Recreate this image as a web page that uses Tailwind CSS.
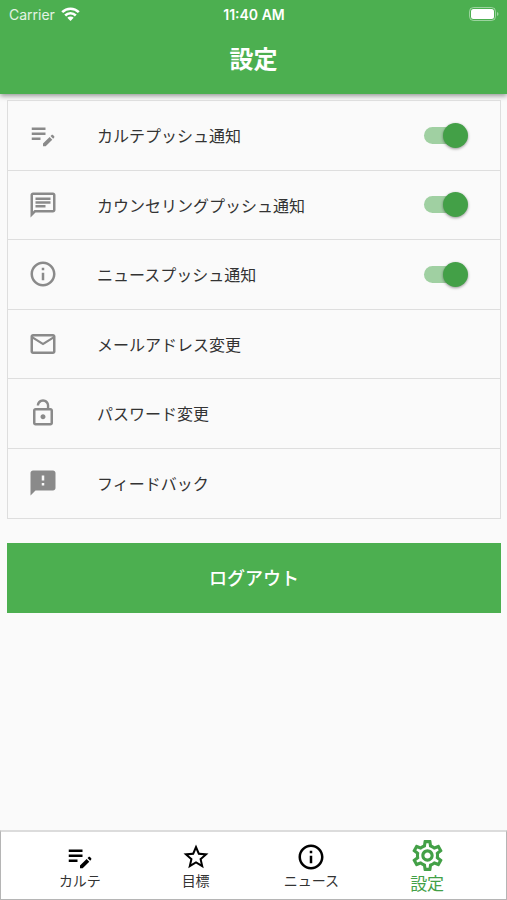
<!DOCTYPE html>
<html lang="ja">
<head>
  <meta charset="UTF-8" />
  <meta name="viewport" content="width=device-width, initial-scale=1.0"/>
  <title>設定</title>
  <script src="https://cdn.jsdelivr.net/npm/@tailwindcss/browser@4"></script>
</head>
<body class="bg-[#fafafa] font-['Inter','Noto_Sans_CJK_JP',sans-serif] text-[#333]">
  <!-- icon dùng chung -->
  <svg class="hidden">
    <symbol id="i-note" viewBox="0 0 24 24"><path d="M3 10h11v2H3v-2zm0-2h11V6H3v2zm0 8h7v-2H3v2zm15.01-3.13.71-.71c.39-.39 1.02-.39 1.41 0l.71.71c.39.39.39 1.02 0 1.41l-.71.71-2.12-2.12zm-.71.71-5.3 5.3V21h2.12l5.3-5.3-2.12-2.12z"/></symbol>
    <symbol id="i-info" viewBox="0 0 24 24"><path d="M11 7h2v2h-2zm0 4h2v6h-2zm1-9C6.48 2 2 6.48 2 12s4.48 10 10 10 10-4.48 10-10S17.52 2 12 2zm0 18c-4.41 0-8-3.59-8-8s3.59-8 8-8 8 3.59 8 8-3.59 8-8 8z"/></symbol>
  </svg>

  <div class="flex flex-col min-h-screen">
    <header class="bg-[#4caf50] text-white shadow-[0_2px_5px_rgba(0,0,0,0.4)]">
      <div class="grid grid-cols-3 items-center h-7 pl-[9px] pr-2 text-[14px]">
        <div class="flex items-center gap-[6px] text-white/85">
          <span>Carrier</span>
          <svg class="w-[19px] h-[14px]" viewBox="0 0 19 14" fill="none" stroke="#fff" stroke-width="2.6">
            <path d="M1.2 5.2a11.8 11.8 0 0 1 16.6 0M4.2 8.5a7.5 7.5 0 0 1 10.6 0"/>
            <path d="M9.5 14 6.3 10.7a4.6 4.6 0 0 1 6.4 0z" fill="#fff" stroke="none"/>
          </svg>
        </div>
        <span class="text-center font-semibold">11:40 AM</span>
        <svg class="w-[30px] h-[14px] justify-self-end" viewBox="0 0 30 14">
          <rect x="0.5" y="0.5" width="26" height="13" rx="4" fill="none" stroke="#fff" stroke-opacity=".45"/>
          <rect x="2" y="2" width="23" height="10" rx="2.5" fill="#fff"/>
          <path d="M28 5v4c2-.8 2-3.2 0-4z" fill="#fff" fill-opacity=".45"/>
        </svg>
      </div>
      <h1 class="h-[66px] pt-[14px] text-center text-[24px] leading-9 font-bold">設定</h1>
    </header>

    <main class="flex-1 pl-[7px] pr-[6px] pt-[6px]">
      <ul class="grid grid-rows-6 min-h-[419px] border border-[#dedede] divide-y divide-[#dedede] text-[16px]">
        <li class="flex items-center pl-5 pr-8">
          <svg class="w-[30px] h-[30px] fill-[#8a8a8a]"><use href="#i-note"/></svg>
          <label for="push-karte" class="flex-1 pl-[39px] pt-[2px]">カルテプッシュ通知</label>
          <input id="push-karte" type="checkbox" checked class="appearance-none relative w-[44px] h-[25px] before:absolute before:left-0 before:top-[4px] before:w-[42px] before:h-[17px] before:rounded-full before:bg-[#bdbdbd] checked:before:bg-[#a0d0a2] after:absolute after:left-0 after:top-0 after:w-[25px] after:h-[25px] after:rounded-full after:bg-white checked:after:left-[19px] checked:after:bg-[#43a047] after:shadow-[0_1px_3px_rgba(0,0,0,0.4)]">
        </li>
        <li class="flex items-center pl-5 pr-8">
          <svg class="w-[30px] h-[30px] fill-[#8a8a8a]" viewBox="0 0 24 24"><path d="M4 4h16v12H5.17L4 17.17V4m0-2c-1.1 0-1.99.9-1.99 2L2 22l4-4h14c1.1 0 2-.9 2-2V4c0-1.1-.9-2-2-2H4zm2 10h8v2H6v-2zm0-3h12v2H6V9zm0-3h12v2H6V6z"/></svg>
          <label for="push-counsel" class="flex-1 pl-[39px] pt-[2px]">カウンセリングプッシュ通知</label>
          <input id="push-counsel" type="checkbox" checked class="appearance-none relative w-[44px] h-[25px] before:absolute before:left-0 before:top-[4px] before:w-[42px] before:h-[17px] before:rounded-full before:bg-[#bdbdbd] checked:before:bg-[#a0d0a2] after:absolute after:left-0 after:top-0 after:w-[25px] after:h-[25px] after:rounded-full after:bg-white checked:after:left-[19px] checked:after:bg-[#43a047] after:shadow-[0_1px_3px_rgba(0,0,0,0.4)]">
        </li>
        <li class="flex items-center pl-5 pr-8">
          <svg class="w-[30px] h-[30px] fill-[#8a8a8a]"><use href="#i-info"/></svg>
          <label for="push-news" class="flex-1 pl-[39px] pt-[2px]">ニュースプッシュ通知</label>
          <input id="push-news" type="checkbox" checked class="appearance-none relative w-[44px] h-[25px] before:absolute before:left-0 before:top-[4px] before:w-[42px] before:h-[17px] before:rounded-full before:bg-[#bdbdbd] checked:before:bg-[#a0d0a2] after:absolute after:left-0 after:top-0 after:w-[25px] after:h-[25px] after:rounded-full after:bg-white checked:after:left-[19px] checked:after:bg-[#43a047] after:shadow-[0_1px_3px_rgba(0,0,0,0.4)]">
        </li>
        <li class="flex">
          <a href="#" class="flex flex-1 items-center gap-[39px] pl-5 pr-8">
            <svg class="w-[30px] h-[30px] fill-[#8a8a8a]" viewBox="0 0 24 24"><path d="M22 6c0-1.1-.9-2-2-2H4c-1.1 0-2 .9-2 2v12c0 1.1.9 2 2 2h16c1.1 0 2-.9 2-2V6zm-2 0-8 5-8-5h16zm0 12H4V8l8 5 8-5v10z"/></svg>
            <span class="pt-[2px]">メールアドレス変更</span>
          </a>
        </li>
        <li class="flex">
          <a href="#" class="flex flex-1 items-center gap-[39px] pl-5 pr-8">
            <svg class="w-[30px] h-[30px] fill-[#8a8a8a]" viewBox="0 0 24 24"><path d="M12 17c1.1 0 2-.9 2-2s-.9-2-2-2-2 .9-2 2 .9 2 2 2zm6-9h-1V6c0-2.76-2.24-5-5-5S7 3.24 7 6h1.9c0-1.71 1.39-3.1 3.1-3.1 1.71 0 3.1 1.39 3.1 3.1v2H6c-1.1 0-2 .9-2 2v10c0 1.1.9 2 2 2h12c1.1 0 2-.9 2-2V10c0-1.1-.9-2-2-2zm0 12H6V10h12v10z"/></svg>
            <span class="pt-[2px]">パスワード変更</span>
          </a>
        </li>
        <li class="flex">
          <a href="#" class="flex flex-1 items-center gap-[39px] pl-5 pr-8">
            <svg class="w-[30px] h-[30px] fill-[#8a8a8a]" viewBox="0 0 24 24"><path d="M20 2H4c-1.1 0-1.99.9-1.99 2L2 22l4-4h14c1.1 0 2-.9 2-2V4c0-1.1-.9-2-2-2zm-7 12h-2v-2h2v2zm0-4h-2V6h2v4z"/></svg>
            <span class="pt-[2px]">フィードバック</span>
          </a>
        </li>
      </ul>

      <button type="button" class="mt-6 w-full h-[70px] bg-[#4caf50] text-white text-[18px] font-medium">ログアウト</button>
    </main>

    <nav class="grid grid-cols-4 h-[70px] px-[21px] bg-white border border-[#b5b5b5] border-t-2 border-t-[#dcdcdc] text-[14px] leading-[18px]">
      <a href="#" class="flex flex-col items-center justify-end pb-[9px]">
        <svg class="w-[30px] h-[30px] fill-black"><use href="#i-note"/></svg>
        カルテ
      </a>
      <a href="#" class="flex flex-col items-center justify-end pb-[9px]">
        <svg class="w-[30px] h-[30px] fill-black" viewBox="0 0 24 24"><path d="M22 9.24l-7.19-.62L12 2 9.19 8.63 2 9.24l5.46 4.73L5.82 21 12 17.27 18.18 21l-1.63-7.03L22 9.24zM12 15.4l-3.76 2.27 1-4.28-3.32-2.88 4.38-.38L12 6.1l1.71 4.04 4.38.38-3.32 2.88 1 4.28L12 15.4z"/></svg>
        目標
      </a>
      <a href="#" class="flex flex-col items-center justify-end pb-[9px]">
        <svg class="w-[30px] h-[30px] fill-black"><use href="#i-info"/></svg>
        ニュース
      </a>
      <a href="#" class="flex flex-col items-center justify-end pb-[5px] text-[17px] leading-5 text-[#43a047]">
        <svg class="w-[37px] h-[37px] fill-[#43a047]" viewBox="0 0 24 24"><path d="M19.43 12.98c.04-.32.07-.64.07-.98 0-.34-.03-.66-.07-.98l2.11-1.65c.19-.15.24-.42.12-.64l-2-3.46c-.09-.16-.26-.25-.44-.25-.06 0-.12.01-.17.03l-2.49 1c-.52-.4-1.08-.73-1.69-.98l-.38-2.65C14.46 2.18 14.25 2 14 2h-4c-.25 0-.46.18-.49.42l-.38 2.65c-.61.25-1.17.59-1.69.98l-2.49-1c-.06-.02-.12-.03-.18-.03-.17 0-.34.09-.43.25l-2 3.46c-.13.22-.07.49.12.64l2.11 1.65c-.04.32-.07.65-.07.98 0 .33.03.66.07.98l-2.11 1.65c-.19.15-.24.42-.12.64l2 3.46c.09.16.26.25.44.25.06 0 .12-.01.17-.03l2.49-1c.52.4 1.08.73 1.69.98l.38 2.65c.03.24.24.42.49.42h4c.25 0 .46-.18.49-.42l.38-2.65c.61-.25 1.17-.59 1.69-.98l2.49 1c.06.02.12.03.18.03.17 0 .34-.09.43-.25l2-3.46c.12-.22.07-.49-.12-.64l-2.11-1.65zm-1.98-1.71c.04.31.05.52.05.73 0 .21-.02.43-.05.73l-.14 1.13.89.7 1.08.84-.7 1.21-1.27-.51-1.04-.42-.9.68c-.43.32-.84.56-1.25.73l-1.06.43-.16 1.13-.2 1.35h-1.4l-.19-1.35-.16-1.13-1.06-.43c-.43-.18-.83-.41-1.23-.71l-.91-.7-1.06.43-1.27.51-.7-1.21 1.08-.84.89-.7-.14-1.13c-.03-.31-.05-.54-.05-.74s.02-.43.05-.73l.14-1.13-.89-.7-1.08-.84.7-1.21 1.27.51 1.04.42.9-.68c.43-.32.84-.56 1.25-.73l1.06-.43.16-1.13.2-1.35h1.39l.19 1.35.16 1.13 1.06.43c.43.18.83.41 1.23.71l.91.7 1.06-.43 1.27-.51.7 1.21-1.07.85-.89.7.14 1.13zM12 8c-2.21 0-4 1.79-4 4s1.79 4 4 4 4-1.79 4-4-1.79-4-4-4zm0 6c-1.1 0-2-.9-2-2s.9-2 2-2 2 .9 2 2-.9 2-2 2z"/></svg>
        設定
      </a>
    </nav>
  </div>
</body>
</html>
